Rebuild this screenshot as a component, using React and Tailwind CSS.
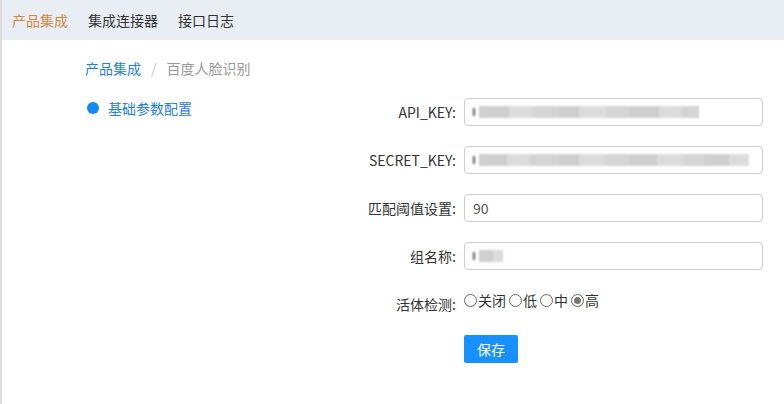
import React from 'react';

// Blurred value inside an input (masked secret)
const Blur = ({ widths }) => (
  <div className="flex items-center h-[12px] blur-[1.2px]">
    <span className="w-[2px] h-[8px] bg-[#555] mr-[4px]" />
    {widths.map((w, i) => (
      <span
        key={i}
        className={i % 3 === 0 ? 'h-[12px] bg-[#cfcfcf]' : i % 3 === 1 ? 'h-[12px] bg-[#dcdcdc]' : 'h-[12px] bg-[#d4d4d4]'}
        style={{ width: w }}
      />
    ))}
  </div>
);

const Row = ({ label, children }) => (
  <div className="flex items-center h-[28px]">
    <label className="w-[120px] pr-[8px] text-right text-[14px] text-[#333]">{label}</label>
    {children}
  </div>
);

const Box = ({ children }) => (
  <div className="w-[299px] h-[28px] border border-[#cccccc] rounded-[4px] flex items-center px-[8px] text-[14px] text-[#555]">
    {children}
  </div>
);

const Radio = ({ label, checked }) => (
  <span className="flex items-center mr-[3px]">
    <span className="w-[13px] h-[13px] rounded-full border border-[#666] flex items-center justify-center bg-white">
      {checked && <span className="w-[7px] h-[7px] rounded-full bg-[#777]" />}
    </span>
    <span className="ml-[1px]">{label}</span>
  </span>
);

const App = () => {
  return (
    <div
      className="min-h-screen border-l-2 border-[#dcdcdc] bg-white"
      style={{ fontFamily: '"Noto Sans CJK SC", "Liberation Sans", sans-serif' }}
    >
      {/* Top tabs */}
      <div className="h-[40px] bg-[#e9eef4] flex items-center pl-[10px] gap-[20px] text-[14px] text-[#333]">
        <span className="text-[#d0893f]">产品集成</span>
        <span>集成连接器</span>
        <span>接口日志</span>
      </div>

      <div className="pl-[83px] pt-[18px]">
        {/* Breadcrumb */}
        <div className="flex items-center h-[20px] text-[14px]">
          <span className="text-[#1f80d8]">产品集成</span>
          <span className="mx-[10px] text-[#c8c8c8]">/</span>
          <span className="text-[#999]">百度人脸识别</span>
        </div>

        <div className="flex pt-[20px]">
          {/* Sidebar */}
          <div className="w-[259px]">
            <div className="flex items-center h-[20px] pl-[2px]">
              <span className="w-[12px] h-[12px] rounded-full bg-[#1488f5]" />
              <span className="ml-[9px] text-[14px] text-[#1f80e0]">基础参数配置</span>
            </div>
          </div>

          {/* Form */}
          <div className="flex flex-col gap-[20px]">
            <Row label="API_KEY:">
              <Box>
                <Blur widths={[30, 24, 26, 20, 28, 22, 30, 22, 18]} />
              </Box>
            </Row>
            <Row label="SECRET_KEY:">
              <Box>
                <Blur widths={[28, 22, 30, 20, 26, 24, 28, 26, 22, 24, 20]} />
              </Box>
            </Row>
            <Row label="匹配阈值设置:">
              <Box>90</Box>
            </Row>
            <Row label="组名称:">
              <Box>
                <Blur widths={[14, 10]} />
              </Box>
            </Row>
            <Row label="活体检测:">
              <div className="flex items-center text-[14px] text-[#333] -mt-[7px]">
                <Radio label="关闭" />
                <Radio label="低" />
                <Radio label="中" />
                <Radio label="高" checked />
              </div>
            </Row>
            <div className="pl-[120px] -mt-[3px]">
              <button className="w-[54px] h-[28px] bg-[#1890ff] text-white text-[14px] rounded-[2px]">保存</button>
            </div>
          </div>
        </div>
      </div>
    </div>
  );
};

export default App;
